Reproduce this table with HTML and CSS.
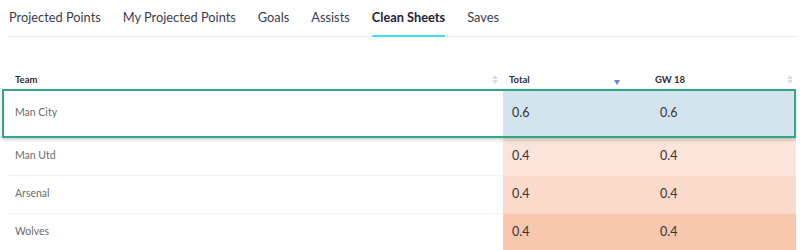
FILE: index.html
```html
<!DOCTYPE html>
<html>
<head>
<meta charset="utf-8">
<link rel="stylesheet" href="styles.css">
</head>
<body>
<nav class="tabs">
  <span class="tab">Projected Points</span>
  <span class="tab">My Projected Points</span>
  <span class="tab">Goals</span>
  <span class="tab">Assists</span>
  <span class="tab active">Clean Sheets</span>
  <span class="tab">Saves</span>
</nav>
<div class="table">
  <div class="head">
    <div class="hcell team-h"><span>Team</span><span class="sort"><i class="up"></i><i class="down"></i></span></div>
    <div class="hcell total-h"><span>Total</span><span class="sort-active"></span></div>
    <div class="hcell gw-h"><span>GW 18</span><span class="sort"><i class="up"></i><i class="down"></i></span></div>
  </div>
  <div class="row selected">
    <div class="team">Man City</div>
    <div class="val c-blue">0.6</div>
    <div class="val c-blue gw">0.6</div>
  </div>
  <div class="row">
    <div class="team">Man Utd</div>
    <div class="val c-p1">0.4</div>
    <div class="val c-p1 gw">0.4</div>
  </div>
  <div class="row">
    <div class="team">Arsenal</div>
    <div class="val c-p2">0.4</div>
    <div class="val c-p2 gw">0.4</div>
  </div>
  <div class="row">
    <div class="team">Wolves</div>
    <div class="val c-p3">0.4</div>
    <div class="val c-p3 gw">0.4</div>
  </div>
</div>
</body>
</html>
```
FILE: styles.css
```css
html, body {
  margin: 0;
  padding: 0;
  background: #fff;
  font-family: Lato, "Open Sans", sans-serif;
}
.tabs {
  display: flex;
  gap: 22px;
  margin: 0 4px 0 8px;
  padding-left: 1px;
  height: 37px;
  border-bottom: 1px solid #ececec;
  box-sizing: border-box;
}
.tab {
  font-size: 12.8px;
  color: #3b3b4d;
  line-height: 1;
  padding-top: 11px;
  height: 37px;
  box-sizing: border-box;
}
.tab.active {
  font-weight: 700;
  color: #23233a;
  border-bottom: 2px solid #3de0e8;
}
.table {
  margin: 33px 4px 0 8px;
}
.head {
  display: grid;
  grid-template-columns: 495px 147px 146px;
  height: 19px;
  align-items: center;
}
.hcell {
  display: flex;
  align-items: center;
  font-size: 9.5px;
  font-weight: 700;
  color: #2d2d3a;
}
.team-h { padding: 0 5px 0 7px; justify-content: space-between; }
.total-h { padding-left: 6px; }
.gw-h { padding: 0 3px 0 5px; justify-content: space-between; }
.sort {
  display: flex;
  flex-direction: column;
  gap: 1px;
}
.sort i {
  display: block;
  width: 0;
  height: 0;
  border-left: 3px solid transparent;
  border-right: 3px solid transparent;
}
.sort .up { border-bottom: 4px solid #dcdcdc; }
.sort .down { border-top: 4px solid #dcdcdc; }
.sort-active {
  width: 0;
  height: 0;
  margin-left: 84px;
  margin-top: 5px;
  border-left: 3.5px solid transparent;
  border-right: 3.5px solid transparent;
  border-top: 5px solid #6e7fd8;
}
.row {
  display: grid;
  grid-template-columns: 495px 147px 146px;
  height: 38px;
}
.row .team {
  display: flex;
  align-items: center;
  padding-left: 7px;
  font-size: 10.5px;
  color: #6b6b6b;
  border-bottom: 1px solid #f3f3f3;
  padding-bottom: 3px;
}
.row .val {
  display: flex;
  align-items: center;
  padding-left: 9px;
  padding-bottom: 3px;
  font-size: 12.5px;
  color: #333;
}
.row .val.gw { padding-left: 10px; }
.row.selected {
  height: 45px;
  margin-left: -6px;
  grid-template-columns: 499px 147px 144px;
  border: 2px solid #2ea687;
  box-shadow: 0 2px 3px rgba(0,0,0,0.18);
  position: relative;
  z-index: 1;
}
.row.selected .team {
  padding-left: 11px;
  border-bottom: none;
}
.c-blue { background: #d3e4ee; }
.c-p1 { background: #fbe4d9; }
.c-p2 { background: #fadbcb; }
.c-p3 { background: #f7c7ae; }
```
